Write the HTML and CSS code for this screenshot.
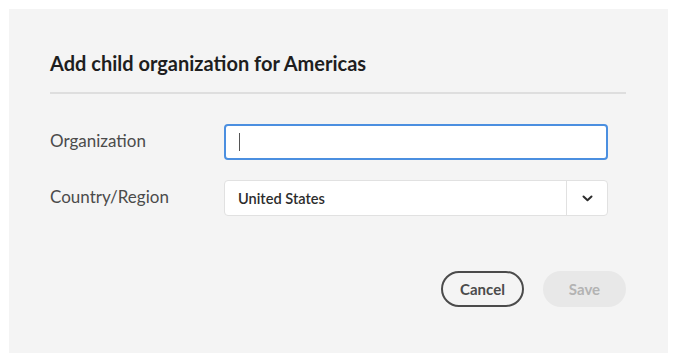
FILE: index.html
```html
<!DOCTYPE html>
<html>
<head>
<meta charset="utf-8">
<link rel="stylesheet" href="styles.css">
</head>
<body>
<div class="dialog">
  <h2 class="title">Add child organization for Americas</h2>
  <div class="divider"></div>
  <div class="form">
    <div class="row">
      <label class="label">Organization</label>
      <div class="input focused"><span class="caret"></span></div>
    </div>
    <div class="row">
      <label class="label">Country/Region</label>
      <div class="select">
        <span class="value">United States</span>
        <span class="toggle">
          <svg width="11" height="7" viewBox="0 0 11 7"><path d="M1.5 1.5 L5.5 5.2 L9.5 1.5" fill="none" stroke="#2c2c2c" stroke-width="2" stroke-linecap="round" stroke-linejoin="round"/></svg>
        </span>
      </div>
    </div>
  </div>
  <div class="actions">
    <button class="btn cancel">Cancel</button>
    <button class="btn save" disabled>Save</button>
  </div>
</div>
</body>
</html>
```
FILE: styles.css
```css
html, body {
  margin: 0;
  padding: 0;
  background: #ffffff;
  font-family: Lato, "Open Sans", sans-serif;
}
.dialog {
  margin: 9px;
  width: 659px;
  height: 344px;
  box-sizing: border-box;
  background: #f4f4f4;
  padding: 42px 42px 0 41px;
}
.title {
  margin: 0;
  font-size: 20px;
  line-height: 24px;
  font-weight: 700;
  color: #1e1e1e;
}
.divider {
  margin-top: 17px;
  height: 2px;
  background: #dedede;
}
.form {
  margin-top: 30px;
  display: flex;
  flex-direction: column;
  gap: 20px;
}
.row {
  display: flex;
  align-items: center;
}
.label {
  width: 174px;
  font-size: 17px;
  line-height: 20px;
  margin-top: -3px;
  color: #4b4b4b;
}
.input, .select {
  width: 384px;
  height: 36px;
  box-sizing: border-box;
  background: #ffffff;
  border-radius: 4px;
}
.input.focused {
  border: 2px solid #4b8fe0;
  display: flex;
  align-items: center;
  padding-left: 13px;
}
.caret {
  width: 1px;
  height: 18px;
  background: #555;
}
.select {
  border: 1px solid #e1e1e1;
  display: flex;
  align-items: center;
}
.value {
  flex: 1;
  padding-left: 13px;
  font-size: 14.6px;
  font-weight: 600;
  color: #2c2c2c;
}
.toggle {
  width: 40px;
  height: 100%;
  border-left: 1px solid #e1e1e1;
  display: flex;
  align-items: center;
  justify-content: center;
}
.actions {
  margin-top: 55px;
  display: flex;
  justify-content: flex-end;
  gap: 19px;
}
.btn {
  height: 36px;
  width: 83px;
  border-radius: 18px;
  font-family: Lato, "Open Sans", sans-serif;
  font-size: 15px;
  font-weight: 700;
  box-sizing: border-box;
}
.cancel {
  background: transparent;
  border: 2px solid #4b4b4b;
  color: #4b4b4b;
}
.save {
  background: #e8e8e8;
  border: none;
  color: #b3b3b3;
}
```
